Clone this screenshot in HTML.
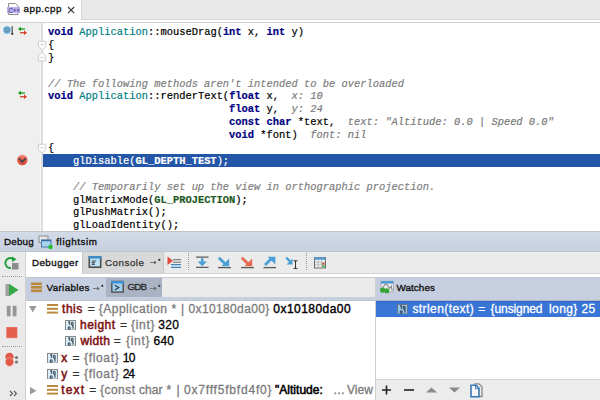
<!DOCTYPE html>
<html><head><meta charset="utf-8">
<style>
*{margin:0;padding:0;box-sizing:border-box}
html,body{width:600px;height:400px;overflow:hidden;background:#fff;position:relative;font-family:"Liberation Sans",sans-serif}
.a{position:absolute}
.code{position:absolute;left:48px;top:26px;font-family:"Liberation Mono",monospace;font-size:10.42px;line-height:12.9px;color:#000;-webkit-text-stroke-width:0.2px}
.code div{height:12.9px;white-space:pre}
.k{color:#000080;font-weight:bold}
.c{color:#008080}
.cm{color:#808080;font-style:italic}
.h{color:#7a7a7a;font-style:italic}
.m{color:#1f5a1f;font-weight:bold}
.t{position:absolute;white-space:pre;font-family:"Liberation Sans",sans-serif}
.ui{font-family:"Liberation Sans",sans-serif;white-space:pre;position:absolute}
.tree{font-size:11px;white-space:pre;position:absolute;color:#000}
.v{color:#7f0a0a;font-weight:bold}
.g{color:#606060}
</style></head><body>

<!-- tab bar -->
<div class="a" style="left:82px;top:0;width:518px;height:19px;background:#e9e9e9;border-left:1px solid #d4d4d4;border-bottom:1px solid #d4d4d4;left:81px;width:519px;height:20px"></div>
<div class="a" style="left:0;top:22px;width:600px;height:1px;background:#d2d2d2"></div>
<svg class="a" style="left:6px;top:2px" width="16" height="15" viewBox="0 0 16 15">
  <path d="M2.5 12.5V1.5h7l2.5 2.5v8.5z" fill="#fff" stroke="#8a8a8a" stroke-width="1"/>
  <rect x="1" y="5" width="13" height="6" fill="#b7aaf7"/>
  <text x="2.2" y="10.6" font-family="Liberation Sans" font-size="6.6" fill="#3e3e4e">C</text><path d="M7.4 8.2h2.6M8.7 6.9v2.6M10.9 8.2h2.6M12.2 6.9v2.6" stroke="#555568" stroke-width="0.8"/>
</svg>

<!-- gutter -->
<div class="a" style="left:0;top:23px;width:40px;height:209px;background:#efefef"></div>
<div class="a" style="left:40px;top:23px;width:1px;height:209px;background:#f6f6f6"></div>
<div class="a" style="left:41px;top:23px;width:2px;height:209px;background:#dddddd"></div>

<!-- highlight line -->
<div class="a" style="left:43px;top:154px;width:557px;height:13px;background:#2456a8"></div>

<div class="code">
<div><span class="k">void</span> <span class="c">Application</span>::mouseDrag(<span class="k">int</span> x, <span class="k">int</span> y)</div>
<div>{</div>
<div>}</div>
<div></div>
<div class="cm">// The following methods aren't intended to be overloaded</div>
<div><span class="k">void</span> <span class="c">Application</span>::renderText(<span class="k">float</span> x,  <span class="h">x: 10</span></div>
<div>                             <span class="k">float</span> y,  <span class="h">y: 24</span></div>
<div>                             <span class="k">const char</span> *text,  <span class="h">text: "Altitude: 0.0 | Speed 0.0"</span></div>
<div>                             <span class="k">void</span> *font)  <span class="h">font: nil</span></div>
<div>{</div>
<div style="color:#fff">    glDisable(<b>GL_DEPTH_TEST</b>);</div>
<div></div>
<div class="cm">    // Temporarily set up the view in orthographic projection.</div>
<div>    glMatrixMode(<span class="m">GL_PROJECTION</span>);</div>
<div>    glPushMatrix();</div>
<div>    glLoadIdentity();</div>
</div>

<!-- gutter icons -->
<svg class="a" style="left:2px;top:25px" width="28" height="12" viewBox="0 0 28 12">
  <circle cx="5" cy="5" r="3.7" fill="#5aa9dc"/>
  <circle cx="5" cy="5" r="1.8" fill="none" stroke="#7a8a98" stroke-width="1"/>
  <path d="M10.2 1.2v7.5" stroke="#555" stroke-width="1.3"/>
  <path d="M8.6 8.2h3.2l-1.6 2z" fill="#222"/>
  <path d="M17 4h6" stroke="#2aa02a" stroke-width="1.4"/><path d="M16 4l3-2.2v4.4z" fill="#1a9a1a"/>
  <path d="M18 7.7h6" stroke="#d84a3a" stroke-width="1.4"/><path d="M25 7.7l-3-2.2v4.4z" fill="#d83a2a"/>
</svg>
<svg class="a" style="left:16px;top:89px" width="14" height="12" viewBox="0 0 14 12">
  <path d="M3 4h6" stroke="#2aa02a" stroke-width="1.4"/><path d="M2 4l3-2.2v4.4z" fill="#1a9a1a"/>
  <path d="M4 7.7h6" stroke="#d84a3a" stroke-width="1.4"/><path d="M11 7.7l-3-2.2v4.4z" fill="#d83a2a"/>
</svg>
<svg class="a" style="left:16px;top:154px" width="13" height="13" viewBox="0 0 13 13">
  <defs><linearGradient id="bpg" x1="0" y1="0" x2="0" y2="1"><stop offset="0" stop-color="#f08a7c"/><stop offset="0.5" stop-color="#e35a48"/><stop offset="1" stop-color="#d84a3a"/></linearGradient></defs>
  <circle cx="6.3" cy="6" r="5.8" fill="#fbe8e4"/>
  <circle cx="6.3" cy="6" r="5.2" fill="url(#bpg)"/>
  <path d="M2.8 4.2l3.4 3.7 3.6-3.7" fill="none" stroke="#3a4452" stroke-width="1.6"/>
</svg>
<!-- fold markers -->
<svg class="a" style="left:37px;top:40px" width="10" height="23" viewBox="0 0 10 23">
  <path d="M1.4 1.2h7.4v5.4l-3.7 3.6l-3.7-3.6z" fill="#fafafa" stroke="#cfcfcf" stroke-width="1"/>
  <path d="M3.6 4.6h3" stroke="#c4c4c4" stroke-width="0.8"/>
  <path d="M1.4 21h7.4v-5.4l-3.7-3.6l-3.7 3.6z" fill="#fafafa" stroke="#cfcfcf" stroke-width="1"/>
  <path d="M3.6 17.5h3" stroke="#c4c4c4" stroke-width="0.8"/>
</svg>
<svg class="a" style="left:37px;top:143px" width="10" height="12" viewBox="0 0 10 12">
  <path d="M1.4 1.2h7.4v5.4l-3.7 3.6l-3.7-3.6z" fill="#fafafa" stroke="#cfcfcf" stroke-width="1"/>
  <path d="M3.6 4.6h3" stroke="#c4c4c4" stroke-width="0.8"/>
</svg>

<!-- debug header -->
<div class="a" style="left:0;top:231px;width:600px;height:1px;background:#c4c4c4"></div>
<div class="a" style="left:0;top:232px;width:600px;height:20px;background:linear-gradient(#d3dbe8,#c7d0e0);border-bottom:1px solid #bcc4d0"></div>
<svg class="a" style="left:37px;top:234px" width="16" height="16" viewBox="0 0 16 16">
  <rect x="2" y="2" width="9" height="6.5" fill="#e8e8e8" stroke="#8a8a8a" stroke-width="1"/>
  <rect x="4.5" y="6" width="9.5" height="7" fill="#a8d4f0" stroke="#4a7ab0" stroke-width="1"/>
  <path d="M4.5 6.5h9.5" stroke="#3a6aa0" stroke-width="1.4"/>
  <circle cx="13.5" cy="13" r="2.2" fill="#22c022"/>
</svg>

<!-- toolbar row -->
<div class="a" style="left:0;top:252px;width:25px;height:148px;background:#eaeaea"></div>
<div class="a" style="left:25px;top:252px;width:1px;height:148px;background:#d0d0d0"></div>
<div class="a" style="left:26px;top:252px;width:56px;height:25px;background:#fff"></div>
<div class="a" style="left:82px;top:252px;width:518px;height:21px;background:#ebebeb"></div>
<div class="a" style="left:82px;top:252px;width:82px;height:21px;background:#d9d9d9;border-left:1px solid #c8c8c8;border-right:1px solid #c8c8c8"></div>
<div class="a" style="left:82px;top:273px;width:518px;height:1px;background:#d2d2d2"></div>
<div class="a" style="left:82px;top:274px;width:518px;height:3px;background:#fff"></div>
<svg class="a" style="left:88px;top:256px" width="14" height="12" viewBox="0 0 14 12">
  <rect x="1.3" y="1" width="11.4" height="10.2" fill="#bfe3f8" stroke="#4e4e4e" stroke-width="1.6"/>
  <rect x="0.5" y="0.2" width="13" height="2.4" fill="#3d8fd0"/>
  <path d="M3.8 5h4.5M3.8 6.7h3M3.8 8.3h3" stroke="#4a4a4a" stroke-width="1.2"/>
</svg>

<!-- left toolbar icons -->
<svg class="a" style="left:3px;top:256px" width="18" height="15" viewBox="0 0 18 15">
  <path d="M10.5 3.2A5 5 0 1 0 8 12" fill="none" stroke="#1e9e3a" stroke-width="1.9"/>
  <path d="M9 0.5l4.5 2.7-4.5 2.7z" fill="#1e9e3a"/>
  <rect x="9" y="7" width="6.5" height="6.5" fill="#8c8c8c"/>
</svg>
<div class="a" style="left:2px;top:276px;width:20px;height:1px;border-top:1px dotted #9a9a9a"></div>
<svg class="a" style="left:5px;top:283px" width="15" height="14" viewBox="0 0 15 14">
  <rect x="0.5" y="1" width="4" height="12" fill="#a0a0a0"/>
  <path d="M4 0.8l9.5 6.2-9.5 6.2z" fill="#34a844"/>
</svg>
<svg class="a" style="left:6px;top:305px" width="12" height="12" viewBox="0 0 12 12">
  <rect x="0.8" y="0.8" width="3.8" height="10.5" fill="#969696"/>
  <rect x="6.7" y="0.8" width="3.8" height="10.5" fill="#969696"/>
</svg>
<svg class="a" style="left:6px;top:327px" width="12" height="12" viewBox="0 0 12 12">
  <rect x="0.2" y="0" width="11" height="11" fill="#e4604f" stroke="#f0a8a0" stroke-width="0.5"/>
</svg>
<div class="a" style="left:2px;top:346px;width:20px;height:1px;border-top:1px dotted #9a9a9a"></div>
<svg class="a" style="left:4px;top:352px" width="16" height="16" viewBox="0 0 16 16">
  <circle cx="5.5" cy="5" r="4.2" fill="#e2594a"/>
  <circle cx="5.5" cy="10" r="4.2" fill="#e2594a" stroke="#f7c8c0" stroke-width="0.5"/>
  <circle cx="12.5" cy="5.5" r="1.6" fill="#777"/>
  <circle cx="12.5" cy="10" r="1.6" fill="#777"/>
</svg>
<svg class="a" style="left:9px;top:390px" width="9" height="7" viewBox="0 0 9 7">
  <path d="M1 1l2.5 2.5L1 6M5 1l2.5 2.5L5 6" fill="none" stroke="#5a5a5a" stroke-width="1.1"/>
</svg>

<!-- toolbar action icons -->
<svg class="a" style="left:166px;top:255px" width="16" height="14" viewBox="0 0 16 14">
  <path d="M1.5 1.5l5.5 4.2-5.5 4.2z" fill="#e0483a"/>
  <path d="M7 4.7h8M7 7.2h8" stroke="#6a6a6a" stroke-width="1"/>
  <path d="M5 9.7h10M5 12.3h10" stroke="#3f86c0" stroke-width="1.2"/>
</svg>
<div class="a" style="left:188px;top:253px;width:1px;height:17px;border-left:1px dotted #9a9a9a"></div>
<svg class="a" style="left:160px;top:250px" width="145" height="25" viewBox="160 250 145 25">
  <path d="M196 257.2h12.5M196 267.4h12.5" stroke="#5a5a5a" stroke-width="1.3"/>
  <path d="M202.2 258.3v4.5" stroke="#4a9fd6" stroke-width="2.6"/>
  <path d="M197.5 261.6h9.5l-4.75 4.6z" fill="#4a9fd6"/>
  <path d="M218.8 257.8l6.5 6.3" stroke="#4a9fd6" stroke-width="2.8"/>
  <path d="M229.2 258.4v7.8h-7.8z" fill="#4a9fd6"/>
  <path d="M218 267.6h13" stroke="#5a5a5a" stroke-width="1.3"/>
  <path d="M241.8 257.8l6.5 6.3" stroke="#e56a52" stroke-width="2.8"/>
  <path d="M252.2 258.4v7.8h-7.8z" fill="#e56a52"/>
  <path d="M241 267.6h13" stroke="#5a5a5a" stroke-width="1.3"/>
  <path d="M265 265l6.3-6.3" stroke="#4a9fd6" stroke-width="2.8"/>
  <path d="M267.6 256.8h7.8v7.8z" fill="#4a9fd6"/>
  <path d="M263.5 267.6h12.5" stroke="#5a5a5a" stroke-width="1.3"/>
  <path d="M286.2 257.5l3.8 3.8" stroke="#4a9fd6" stroke-width="2.4"/>
  <path d="M292.5 258.5v6h-6z" fill="#4a9fd6"/>
  <path d="M293.5 260.8h4M295.5 260.8v7.6M293.5 268.4h4" stroke="#333" stroke-width="1"/>
</svg>
<div class="a" style="left:306px;top:253px;width:1px;height:17px;border-left:1px dotted #9a9a9a"></div>
<svg class="a" style="left:313px;top:256px" width="14" height="13" viewBox="0 0 14 13">
  <rect x="1.5" y="1.5" width="11" height="10.5" fill="#eef1f4" stroke="#6e6e6e" stroke-width="1"/>
  <rect x="1.5" y="1.2" width="11" height="2.6" fill="#5a9ad2"/>
  <path d="M2 6.3h10M2 8.8h10M5.2 4v7.5M8.5 4v7.5" stroke="#b4b4b4" stroke-width="0.8"/>
  <rect x="9.2" y="6.8" width="2.4" height="1.8" fill="#e04040"/>
  <rect x="9.2" y="9.3" width="2.4" height="2" fill="#30b030"/>
</svg>

<!-- variables header -->
<div class="a" style="left:26px;top:277px;width:349px;height:1px;background:#c4c8cc"></div>
<div class="a" style="left:26px;top:278px;width:349px;height:19px;background:#ebebeb"></div>
<div class="a" style="left:26px;top:297px;width:349px;height:3px;background:#c6cfe0"></div>
<div class="a" style="left:26px;top:300px;width:349px;height:1px;background:#c0c6d0"></div>
<div class="a" style="left:26px;top:278px;width:80px;height:19px;background:#c6cfe0"></div>
<div class="a" style="left:106px;top:278px;width:56px;height:19px;background:#a9b3c3"></div>
<svg class="a" style="left:31px;top:282px" width="12" height="11" viewBox="0 0 12 11">
  <rect x="0" y="0.5" width="11" height="2.6" fill="#b98a3e"/>
  <rect x="0" y="4" width="11" height="2.6" fill="#b98a3e"/>
  <rect x="0" y="7.5" width="11" height="2.6" fill="#b98a3e"/>
</svg>
<svg class="a" style="left:110px;top:280px" width="15" height="14" viewBox="0 0 15 14">
  <rect x="1.8" y="1.5" width="11.4" height="10.6" fill="#9ed2f2" stroke="#585858" stroke-width="1.5"/>
  <rect x="1" y="1" width="13" height="2.4" fill="#3d8fd0"/>
  <path d="M4.8 5.2l4 2.4-4 2.4" fill="none" stroke="#3a3a3a" stroke-width="1.2"/>
</svg>

<!-- watches panel -->
<div class="a" style="left:375px;top:277px;width:1px;height:123px;background:#d0d0d0"></div>
<div class="a" style="left:376px;top:277px;width:224px;height:1px;background:#c4c8cc"></div>
<div class="a" style="left:376px;top:278px;width:224px;height:22px;background:#c6cfe0"></div>
<div class="a" style="left:376px;top:300px;width:224px;height:1px;background:#b4b8be"></div>
<div class="a" style="left:376px;top:301px;width:224px;height:1px;background:#2c66cc"></div>
<svg class="a" style="left:378px;top:279px" width="20" height="16" viewBox="0 0 20 16">
  <rect x="3" y="2.2" width="12.5" height="10.8" fill="#e6e9ee" stroke="#a8a8a8" stroke-width="0.8"/>
  <rect x="3" y="2" width="12.5" height="2.6" fill="#4f9bd3"/>
  <path d="M4.5 9.5L7 5.3L9 5.5L11.5 9.5L13.3 7L14.2 12" fill="none" stroke="#8c8c8c" stroke-width="1.1"/>
  <circle cx="4.6" cy="11.1" r="2.6" fill="#3aa63a"/>
  <circle cx="8.8" cy="11.8" r="2.6" fill="#3aa63a"/>
</svg>
<div class="a" style="left:376px;top:302px;width:224px;height:15px;background:#3875d7"></div>
<svg class="a" style="left:397px;top:304px" width="11" height="10" viewBox="0 0 11 10">
  <rect x="0.5" y="0.5" width="10" height="9.5" fill="#8ec6f4" stroke="#6a7486" stroke-width="1"/>
  <path d="M3.2 2.3l1.2-0.6v3M7.2 2.3a1 1.3 0 1 0 0.01 0M4.2 6.8a1 1.3 0 1 0 0.01 0M7 6.2l1-0.5v3" fill="none" stroke="#3e4a58" stroke-width="1.2"/>
</svg>

<!-- bottom watches toolbar -->
<div class="a" style="left:376px;top:379px;width:224px;height:1px;background:#d6d6d6"></div>
<div class="a" style="left:376px;top:380px;width:224px;height:20px;background:#ececec"></div>
<svg class="a" style="left:380px;top:383px" width="110" height="15" viewBox="0 0 110 15">
  <path d="M6.5 2.5v9M2 7h9" stroke="#222" stroke-width="1.6"/>
  <path d="M24 7h10" stroke="#222" stroke-width="1.6"/>
  <path d="M46 9.5l5.5-5 5.5 5z" fill="#8a8a8a"/>
  <path d="M69 4.5l5.5 5 5.5-5z" fill="#8a8a8a"/>
  <path d="M94 0.8h5l3 3v9.7h-3" fill="none" stroke="#8a8a8a" stroke-width="1.3"/>
  <path d="M91 2.3h5l3 3v8.4h-8z" fill="#f6f6f6" stroke="#3a78b4" stroke-width="1.6"/>
  <path d="M95.5 2.5v3.3h3.3" fill="none" stroke="#3a78b4" stroke-width="0.9"/>
</svg>

<!-- variables tree -->
<svg class="a" style="left:29px;top:306px" width="8" height="7" viewBox="0 0 8 7"><path d="M0 0h7.5l-3.75 6.5z" fill="#9a9a9a"/></svg>
<svg class="a" style="left:47px;top:304px" width="12" height="10" viewBox="0 0 12 10">
  <rect x="0" y="0" width="11" height="2" fill="#b98a3e"/><rect x="0" y="3.8" width="11" height="2" fill="#b98a3e"/><rect x="0" y="7.6" width="11" height="2" fill="#b98a3e"/>
</svg>

<svg class="a" style="left:65px;top:320px" width="11" height="10" viewBox="0 0 11 10">
  <rect x="0.5" y="0.5" width="10" height="9.5" fill="#d8f0fb" stroke="#8a8a8a" stroke-width="1"/>
  <path d="M3.2 2.3l1.2-0.6v3M7.2 2.3a1 1.3 0 1 0 0.01 0M4.2 6.8a1 1.3 0 1 0 0.01 0M7 6.2l1-0.5v3" fill="none" stroke="#4a5866" stroke-width="1.2"/>
</svg>
<svg class="a" style="left:65px;top:336px" width="11" height="10" viewBox="0 0 11 10">
  <rect x="0.5" y="0.5" width="10" height="9.5" fill="#d8f0fb" stroke="#8a8a8a" stroke-width="1"/>
  <path d="M3.2 2.3l1.2-0.6v3M7.2 2.3a1 1.3 0 1 0 0.01 0M4.2 6.8a1 1.3 0 1 0 0.01 0M7 6.2l1-0.5v3" fill="none" stroke="#4a5866" stroke-width="1.2"/>
</svg>
<svg class="a" style="left:47px;top:353px" width="11" height="10" viewBox="0 0 11 10">
  <rect x="0.5" y="0.5" width="10" height="9.5" fill="#d8f0fb" stroke="#8a8a8a" stroke-width="1"/>
  <path d="M3.2 2.3l1.2-0.6v3M7.2 2.3a1 1.3 0 1 0 0.01 0M4.2 6.8a1 1.3 0 1 0 0.01 0M7 6.2l1-0.5v3" fill="none" stroke="#4a5866" stroke-width="1.2"/>
</svg>
<svg class="a" style="left:47px;top:369px" width="11" height="10" viewBox="0 0 11 10">
  <rect x="0.5" y="0.5" width="10" height="9.5" fill="#d8f0fb" stroke="#8a8a8a" stroke-width="1"/>
  <path d="M3.2 2.3l1.2-0.6v3M7.2 2.3a1 1.3 0 1 0 0.01 0M4.2 6.8a1 1.3 0 1 0 0.01 0M7 6.2l1-0.5v3" fill="none" stroke="#4a5866" stroke-width="1.2"/>
</svg>
<svg class="a" style="left:30px;top:387px" width="7" height="8" viewBox="0 0 7 8"><path d="M0 0v7.5l6.5-3.75z" fill="#9a9a9a"/></svg>
<svg class="a" style="left:47px;top:385px" width="12" height="10" viewBox="0 0 12 10">
  <rect x="0" y="0" width="11" height="2" fill="#b98a3e"/><rect x="0" y="3.8" width="11" height="2" fill="#b98a3e"/><rect x="0" y="7.6" width="11" height="2" fill="#b98a3e"/>
</svg>


<!-- close x -->
<svg class="a" style="left:66px;top:5px" width="10" height="10" viewBox="0 0 10 10">
  <path d="M2 2l6.2 6.2M8.2 2L2 8.2" stroke="#3a3a3a" stroke-width="1.15"/>
</svg>
<!-- pin markers -->
<svg class="a" style="left:149px;top:258px" width="13" height="8" viewBox="0 0 13 8">
  <path d="M1 4.5h5" stroke="#7a7a7a" stroke-width="1"/><path d="M5 2.5l2.8 2-2.8 2z" fill="#6a6a6a"/>
  <circle cx="10.3" cy="1.9" r="1.1" fill="#3a3a3a"/>
</svg>
<svg class="a" style="left:92px;top:284px" width="13" height="8" viewBox="0 0 13 8">
  <path d="M1 4.5h5" stroke="#7a7a7a" stroke-width="1"/><path d="M5 2.5l2.8 2-2.8 2z" fill="#6a6a6a"/>
  <circle cx="10.3" cy="1.9" r="1.1" fill="#3a3a3a"/>
</svg>
<svg class="a" style="left:149px;top:284px" width="13" height="8" viewBox="0 0 13 8">
  <path d="M1 4.5h5" stroke="#7a7a7a" stroke-width="1"/><path d="M5 2.5l2.8 2-2.8 2z" fill="#6a6a6a"/>
  <circle cx="10.3" cy="1.9" r="1.1" fill="#3a3a3a"/>
</svg>
<div class="t" style="left:23.50px;top:4.30px;font-size:9.8px;line-height:9.8px;color:#111;letter-spacing:0.504px;word-spacing:-1.504px;-webkit-text-stroke:0.3px #111">app.cpp</div>
<div class="t" style="left:4.00px;top:236.70px;font-size:9.8px;line-height:9.8px;color:#111;letter-spacing:0.206px;word-spacing:-1.206px;-webkit-text-stroke:0.35px #111">Debug</div>
<div class="t" style="left:56.30px;top:236.70px;font-size:9.8px;line-height:9.8px;color:#111;letter-spacing:0.594px;word-spacing:-1.594px;-webkit-text-stroke:0.35px #111">flightsim</div>
<div class="t" style="left:31.90px;top:257.70px;font-size:9.8px;line-height:9.8px;color:#111;letter-spacing:0.479px;word-spacing:-1.479px;-webkit-text-stroke:0.35px #111">Debugger</div>
<div class="t" style="left:105.00px;top:257.70px;font-size:9.8px;line-height:9.8px;color:#333;letter-spacing:0.508px;word-spacing:-1.508px;-webkit-text-stroke:0.25px #333">Console</div>
<div class="t" style="left:46.50px;top:282.60px;font-size:9.8px;line-height:9.8px;color:#111;letter-spacing:0.359px;word-spacing:-1.359px;-webkit-text-stroke:0.35px #111">Variables</div>
<div class="t" style="left:127.50px;top:282.30px;font-size:9.8px;line-height:9.8px;color:#2a2a2a;letter-spacing:-0.863px;word-spacing:-0.137px;-webkit-text-stroke:0.3px #2a2a2a">GDB</div>
<div class="t" style="left:396.40px;top:282.60px;font-size:9.8px;line-height:9.8px;color:#111;letter-spacing:0.125px;word-spacing:-1.125px;-webkit-text-stroke:0.35px #111">Watches</div>
<div class="t" style="left:62.00px;top:303.04px;font-size:12px;line-height:12px;color:#7d1111;letter-spacing:0.542px;word-spacing:-1.542px;-webkit-text-stroke:0.5px #7d1111">this</div>
<div class="t" style="left:87.70px;top:303.04px;font-size:12px;line-height:12px;color:#333;letter-spacing:0.000px;word-spacing:-1.000px;-webkit-text-stroke:0.3px #333">=</div>
<div class="t" style="left:98.75px;top:303.04px;font-size:12px;line-height:12px;color:#7a7a7a;letter-spacing:0.502px;word-spacing:-1.502px;-webkit-text-stroke:0.3px #7a7a7a">{Application</div>
<div class="t" style="left:171.50px;top:303.04px;font-size:12px;line-height:12px;color:#7a7a7a;letter-spacing:0.000px;word-spacing:-1.000px;-webkit-text-stroke:0.3px #7a7a7a">*</div>
<div class="t" style="left:181.00px;top:303.04px;font-size:12px;line-height:12px;color:#7a7a7a;letter-spacing:0.000px;word-spacing:-1.000px;-webkit-text-stroke:0.3px #7a7a7a">|</div>
<div class="t" style="left:188.50px;top:303.04px;font-size:12px;line-height:12px;color:#7a7a7a;letter-spacing:0.368px;word-spacing:-1.368px;-webkit-text-stroke:0.3px #7a7a7a">0x10180da00}</div>
<div class="t" style="left:273.30px;top:303.04px;font-size:12px;line-height:12px;color:#000;letter-spacing:0.465px;word-spacing:-1.465px;-webkit-text-stroke:0.4px #000">0x10180da00</div>
<div class="t" style="left:80.00px;top:319.24px;font-size:12px;line-height:12px;color:#7d1111;letter-spacing:0.460px;word-spacing:-1.460px;-webkit-text-stroke:0.5px #7d1111">height</div>
<div class="t" style="left:120.00px;top:319.24px;font-size:12px;line-height:12px;color:#333;letter-spacing:0.000px;word-spacing:-1.000px;-webkit-text-stroke:0.3px #333">=</div>
<div class="t" style="left:131.00px;top:319.24px;font-size:12px;line-height:12px;color:#7a7a7a;letter-spacing:0.700px;word-spacing:-1.700px;-webkit-text-stroke:0.3px #7a7a7a">{int}</div>
<div class="t" style="left:158.30px;top:319.24px;font-size:12px;line-height:12px;color:#000;letter-spacing:0.287px;word-spacing:-1.287px;-webkit-text-stroke:0.3px #000">320</div>
<div class="t" style="left:80.53px;top:335.44px;font-size:12px;line-height:12px;color:#7d1111;letter-spacing:0.363px;word-spacing:-1.363px;-webkit-text-stroke:0.5px #7d1111">width</div>
<div class="t" style="left:113.75px;top:335.44px;font-size:12px;line-height:12px;color:#333;letter-spacing:0.000px;word-spacing:-1.000px;-webkit-text-stroke:0.3px #333">=</div>
<div class="t" style="left:126.00px;top:335.44px;font-size:12px;line-height:12px;color:#7a7a7a;letter-spacing:0.700px;word-spacing:-1.700px;-webkit-text-stroke:0.3px #7a7a7a">{int}</div>
<div class="t" style="left:153.50px;top:335.44px;font-size:12px;line-height:12px;color:#000;letter-spacing:0.238px;word-spacing:-1.238px;-webkit-text-stroke:0.3px #000">640</div>
<div class="t" style="left:61.30px;top:351.64px;font-size:12px;line-height:12px;color:#7d1111;letter-spacing:0.000px;word-spacing:-1.000px;-webkit-text-stroke:0.5px #7d1111">x</div>
<div class="t" style="left:72.50px;top:351.64px;font-size:12px;line-height:12px;color:#333;letter-spacing:0.000px;word-spacing:-1.000px;-webkit-text-stroke:0.3px #333">=</div>
<div class="t" style="left:84.00px;top:351.64px;font-size:12px;line-height:12px;color:#7a7a7a;letter-spacing:0.667px;word-spacing:-1.667px;-webkit-text-stroke:0.3px #7a7a7a">{float}</div>
<div class="t" style="left:122.70px;top:351.64px;font-size:12px;line-height:12px;color:#000;letter-spacing:-0.550px;word-spacing:-0.450px;-webkit-text-stroke:0.3px #000">10</div>
<div class="t" style="left:61.30px;top:367.84px;font-size:12px;line-height:12px;color:#7d1111;letter-spacing:0.000px;word-spacing:-1.000px;-webkit-text-stroke:0.5px #7d1111">y</div>
<div class="t" style="left:72.50px;top:367.84px;font-size:12px;line-height:12px;color:#333;letter-spacing:0.000px;word-spacing:-1.000px;-webkit-text-stroke:0.3px #333">=</div>
<div class="t" style="left:84.00px;top:367.84px;font-size:12px;line-height:12px;color:#7a7a7a;letter-spacing:0.667px;word-spacing:-1.667px;-webkit-text-stroke:0.3px #7a7a7a">{float}</div>
<div class="t" style="left:122.70px;top:367.84px;font-size:12px;line-height:12px;color:#000;letter-spacing:-1.050px;word-spacing:0.050px;-webkit-text-stroke:0.3px #000">24</div>
<div class="t" style="left:61.30px;top:384.04px;font-size:12px;line-height:12px;color:#7d1111;letter-spacing:1.117px;word-spacing:-2.117px;-webkit-text-stroke:0.5px #7d1111">text</div>
<div class="t" style="left:89.30px;top:384.04px;font-size:12px;line-height:12px;color:#333;letter-spacing:0.000px;word-spacing:-1.000px;-webkit-text-stroke:0.3px #333">=</div>
<div class="t" style="left:100.00px;top:384.04px;font-size:12px;line-height:12px;color:#7a7a7a;letter-spacing:0.460px;word-spacing:-1.460px;-webkit-text-stroke:0.3px #7a7a7a">{const</div>
<div class="t" style="left:139.00px;top:384.04px;font-size:12px;line-height:12px;color:#7a7a7a;letter-spacing:0.050px;word-spacing:-1.050px;-webkit-text-stroke:0.3px #7a7a7a">char</div>
<div class="t" style="left:166.50px;top:384.04px;font-size:12px;line-height:12px;color:#7a7a7a;letter-spacing:0.000px;word-spacing:-1.000px;-webkit-text-stroke:0.3px #7a7a7a">*</div>
<div class="t" style="left:176.50px;top:384.04px;font-size:12px;line-height:12px;color:#7a7a7a;letter-spacing:0.000px;word-spacing:-1.000px;-webkit-text-stroke:0.3px #7a7a7a">|</div>
<div class="t" style="left:184.00px;top:384.04px;font-size:12px;line-height:12px;color:#7a7a7a;letter-spacing:0.800px;word-spacing:-1.800px;-webkit-text-stroke:0.3px #7a7a7a">0x7fff5fbfd4f0}</div>
<div class="t" style="left:275.00px;top:384.04px;font-size:12px;line-height:12px;color:#000;letter-spacing:0.019px;word-spacing:-1.019px;-webkit-text-stroke:0.55px #000">&quot;Altitude:</div>
<div class="t" style="left:333.00px;top:384.04px;font-size:12px;line-height:12px;color:#7a7a7a;letter-spacing:0.000px;word-spacing:-1.000px;-webkit-text-stroke:0.3px #7a7a7a">…</div>
<div class="t" style="left:347.00px;top:384.04px;font-size:12px;line-height:12px;color:#7a7a7a;letter-spacing:0.058px;word-spacing:-1.058px;-webkit-text-stroke:0.3px #7a7a7a">View</div>
<div class="t" style="left:412.40px;top:302.84px;font-size:12px;line-height:12px;color:#fff;letter-spacing:0.420px;word-spacing:-1.420px;-webkit-text-stroke:0.3px #fff">strlen(text)</div>
<div class="t" style="left:478.20px;top:302.84px;font-size:12px;line-height:12px;color:#fff;letter-spacing:0.000px;word-spacing:-1.000px;-webkit-text-stroke:0.3px #fff">=</div>
<div class="t" style="left:490.60px;top:302.84px;font-size:12px;line-height:12px;color:#fff;letter-spacing:-0.103px;word-spacing:-0.897px;-webkit-text-stroke:0.3px #fff">{unsigned</div>
<div class="t" style="left:549.00px;top:302.84px;font-size:12px;line-height:12px;color:#fff;letter-spacing:0.400px;word-spacing:-1.400px;-webkit-text-stroke:0.3px #fff">long}</div>
<div class="t" style="left:581.60px;top:302.84px;font-size:12px;line-height:12px;color:#fff;letter-spacing:0.250px;word-spacing:-1.250px;-webkit-text-stroke:0.3px #fff">25</div>
</body></html>
